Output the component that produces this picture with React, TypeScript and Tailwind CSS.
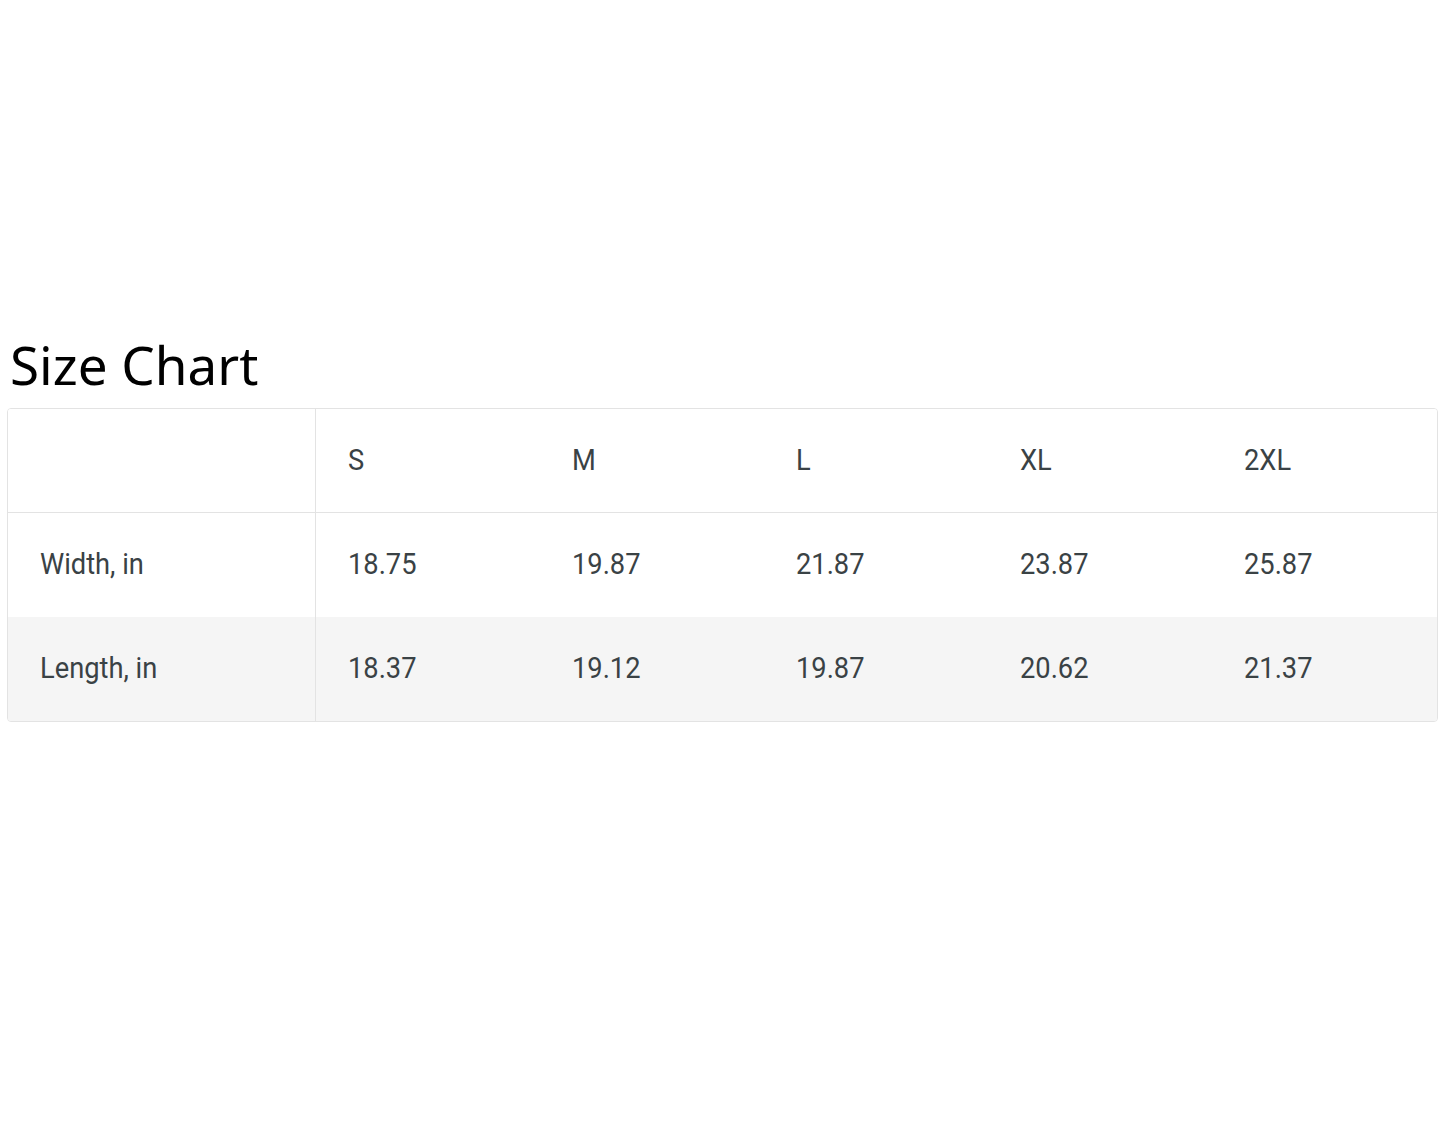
import React from "react";

const sizes = ["S", "M", "L", "XL", "2XL"];
const rows = [
  { label: "Width, in", values: ["18.75", "19.87", "21.87", "23.87", "25.87"], bg: "bg-white" },
  { label: "Length, in", values: ["18.37", "19.12", "19.87", "20.62", "21.37"], bg: "bg-[#f5f5f5]" },
];

function Cell({ children }: { children: React.ReactNode }) {
  return <span className="inline-block scale-x-[0.94] origin-left whitespace-nowrap">{children}</span>;
}

export default function App() {
  return (
    <div className="w-[1445px] h-[1124px] bg-white relative">
      <div className="pt-[333px] pl-[10px]">
        <h1
          className="text-[53px] leading-[64px] text-black"
          style={{ fontFamily: '"Noto Sans", sans-serif' }}
        >
          Size Chart
        </h1>
      </div>
      <div
        className="ml-[7px] mt-[11px] w-[1431px] border border-[#e3e3e3] rounded-[4px] overflow-hidden text-[#3a4245]"
        style={{ fontFamily: 'Roboto, sans-serif' }}
      >
        <div className="flex h-[104px] border-b border-[#e3e3e3] bg-white">
          <div className="w-[308px] border-r border-[#e3e3e3]" />
          {sizes.map((s) => (
            <div key={s} className="w-[224px] flex items-center pl-[32px] text-[29px]">
              <Cell>{s}</Cell>
            </div>
          ))}
        </div>
        {rows.map((r) => (
          <div key={r.label} className={`flex h-[104px] ${r.bg}`}>
            <div className="w-[308px] border-r border-[#e3e3e3] flex items-center pl-[32px] text-[29px]">
              <Cell>{r.label}</Cell>
            </div>
            {r.values.map((v, j) => (
              <div key={j} className="w-[224px] flex items-center pl-[32px] text-[29px]">
                <Cell>{v}</Cell>
              </div>
            ))}
          </div>
        ))}
      </div>
    </div>
  );
}
